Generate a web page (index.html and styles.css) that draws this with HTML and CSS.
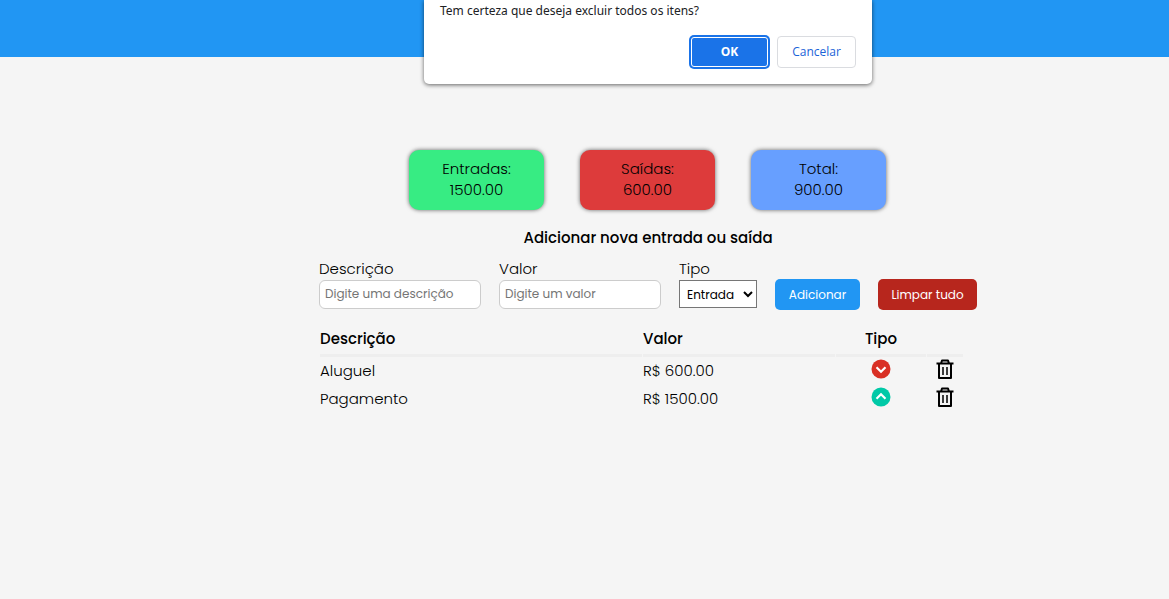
FILE: index.html
```html
<!DOCTYPE html>
<html lang="pt-BR">
<head>
<meta charset="utf-8">
<meta name="viewport" content="width=device-width, initial-scale=1">
<title>Controle financeiro</title>
<link rel="stylesheet" href="styles.css">
</head>
<body>
<svg class="sprite" aria-hidden="true">
  <symbol id="trash" viewBox="0 0 18 20">
    <path d="M.500 4.500h17M3 4.500V19h12V4.500M5 4.500L6 1.500h6l1 3" fill="none" stroke="#000" stroke-width="2" stroke-linejoin="round"/>
    <path d="M7 8v8M11 8v8" fill="none" stroke="#000" stroke-width="1.500"/>
  </symbol>
</svg>
<header class="topbar"></header>
<div class="dialog" role="alertdialog" aria-labelledby="question">
  <p class="dialog-text" id="question">Tem certeza que deseja excluir todos os itens?</p>
  <div class="dialog-actions">
    <button class="dialog-button ok" type="button">OK</button>
    <button class="dialog-button cancel" type="button">Cancelar</button>
  </div>
</div>
<main class="content">
  <section class="summary">
    <div class="card income"><span>Entradas:</span><span>1500.00</span></div>
    <div class="card expense"><span>Saídas:</span><span>600.00</span></div>
    <div class="card total"><span>Total:</span><span>900.00</span></div>
  </section>
  <h1 class="title">Adicionar nova entrada ou saída</h1>
  <form class="form">
    <div class="field">
      <label for="description">Descrição</label>
      <input class="input" id="description" type="text" placeholder="Digite uma descrição">
    </div>
    <div class="field">
      <label for="amount">Valor</label>
      <input class="input" id="amount" type="text" placeholder="Digite um valor">
    </div>
    <div class="field">
      <label for="type">Tipo</label>
      <select class="select" id="type"><option>Entrada</option><option>Saída</option></select>
    </div>
    <button class="button add" type="button">Adicionar</button>
    <button class="button clear" type="button">Limpar tudo</button>
  </form>
  <table class="items">
    <colgroup><col class="col-description"><col class="col-amount"><col class="col-type"><col class="col-remove"></colgroup>
    <thead>
      <tr><th>Descrição</th><th>Valor</th><th class="center">Tipo</th><th></th></tr>
    </thead>
    <tbody>
      <tr>
        <td>Aluguel</td><td>R$ 600.00</td>
        <td class="center"><svg class="icon" viewBox="0 0 20 20" role="img" aria-label="Saída"><circle cx="10" cy="10" r="9.500" fill="#d93025"/><path d="M5.500 8.300l4.500 4.400 4.500-4.400" fill="none" stroke="#fff" stroke-width="2.200"/></svg></td>
        <td class="center"><button class="remove" type="button" aria-label="Excluir Aluguel"><svg class="trash"><use href="#trash"/></svg></button></td>
      </tr>
      <tr>
        <td>Pagamento</td><td>R$ 1500.00</td>
        <td class="center"><svg class="icon" viewBox="0 0 20 20" role="img" aria-label="Entrada"><circle cx="10" cy="10" r="9.500" fill="#00c9a7"/><path d="M5.500 11.700l4.500-4.400 4.500 4.400" fill="none" stroke="#fff" stroke-width="2.200"/></svg></td>
        <td class="center"><button class="remove" type="button" aria-label="Excluir Pagamento"><svg class="trash"><use href="#trash"/></svg></button></td>
      </tr>
    </tbody>
  </table>
</main>
</body>
</html>
```
FILE: styles.css
```css
* { box-sizing: border-box; }

body {
  margin: 0;
  min-height: 100vh;
  background: #f5f5f5;
  color: #000;
  font: 300 15px/21px Poppins, Inter, sans-serif;
}

button, input, select { font: inherit; }
button { cursor: pointer; }

.sprite { position: absolute; width: 0; height: 0; }

.topbar { height: 57px; background: #2196f3; }

.dialog {
  position: absolute;
  top: 0;
  left: 424px;
  width: 448px;
  padding: 2px 16px 16px;
  border-radius: 0 0 5px 5px;
  background: #fff;
  box-shadow: 0 1px 4px rgba(0, 0, 0, 0.6);
  color: #202124;
  font: 12px/18px "Noto Sans", "Open Sans", sans-serif;
}

.dialog-text { margin: 0 0 16px; }

.dialog-actions { display: flex; justify-content: flex-end; gap: 8px; }

.dialog-button {
  height: 32px;
  width: 79px;
  padding: 0;
  border-radius: 4px;
  font-family: "Open Sans", "Noto Sans", sans-serif;
  font-weight: 500;
}

.ok {
  border: 1px solid #fff;
  background: #1a73e8;
  color: #fff;
  box-shadow: 0 0 0 2px #1a73e8;
  height: 30px;
  width: 77px;
  margin: 1px;
  border-radius: 3px;
  font-weight: 700;
}

.cancel { border: 1px solid #dadce0; background: #fff; color: #1a63d8; }

.content {
  display: flex;
  flex-direction: column;
  align-items: center;
  margin-left: 127px;
  padding: 93px 16px 16px;
}

.summary { display: flex; gap: 36px; margin-right: 1px; }

.card {
  display: flex;
  flex-direction: column;
  align-items: center;
  width: 135px;
  padding: 8px 8px 10px;
  border-radius: 10px;
  box-shadow: 0 0 4px rgba(0, 0, 0, 0.6);
}

.income { background: #37ec83; }
.expense { background: #dd3b3b; }
.total { background: #679fff; }

.title { margin: 17px 0 10px; font-size: 15px; line-height: 21px; font-weight: 500; }

.form { display: flex; align-items: flex-end; gap: 18px; }

.field { display: flex; flex-direction: column; height: 52px; }

.input {
  width: 162px;
  height: 29px;
  margin-top: 1px;
  padding: 0 5px 2px;
  border: 1px solid #ccc;
  border-radius: 6px;
  background: #fff;
  font-size: 12px;
  font-weight: 400;
}

.input::placeholder { color: #757575; }

.select {
  width: 78px;
  height: 28px;
  margin-top: 1px;
  padding: 0 3px;
  border: 1px solid #767676;
  border-radius: 0;
  background: #fff;
  color: #000;
  font-size: 12px;
  font-weight: 400;
}

.button {
  height: 31px;
  padding: 0;
  border: 0;
  border-radius: 5px;
  color: #fff;
  font-size: 12px;
  font-weight: 400;
}

.add { width: 85px; background: #2196f3; }
.clear { width: 99px; background: #b7261d; }

.items {
  width: 645px;
  max-width: 100%;
  margin: 17px 13px 0 0;
  table-layout: fixed;
  border-collapse: separate;
  border-spacing: 1px 0;
}

.col-description { width: 322px; }
.col-amount { width: 192px; }
.col-type { width: 90px; }

.items th {
  height: 30px;
  padding: 1px 0 5px;
  border-bottom: 3px solid #eee;
  font-weight: 500;
  text-align: left;
}

.items td { height: 28px; padding: 0 0 1px; }
.items .center { text-align: center; }

.icon { display: block; width: 20px; height: 20px; margin: 0 auto 4px; }

.remove { display: block; margin: 0 auto 4px; padding: 0; border: 0; background: none; }

.trash { display: block; width: 18px; height: 20px; }
```
